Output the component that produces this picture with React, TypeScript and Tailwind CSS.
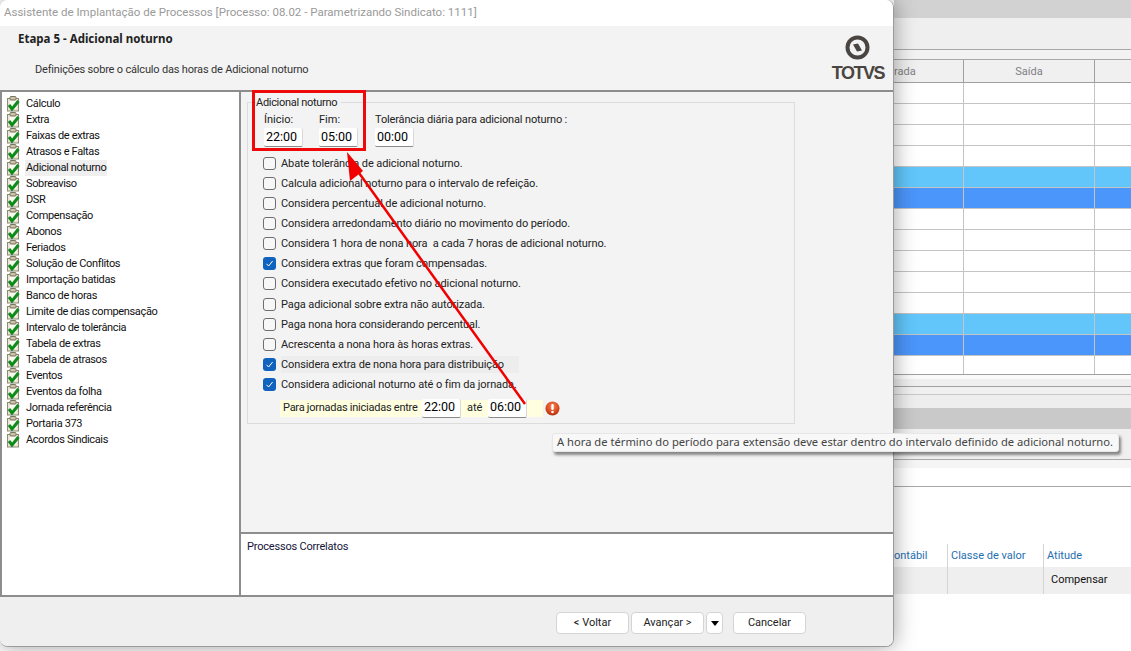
const steps = [
  "Cálculo",
  "Extra",
  "Faixas de extras",
  "Atrasos e Faltas",
  "Adicional noturno",
  "Sobreaviso",
  "DSR",
  "Compensação",
  "Abonos",
  "Feriados",
  "Solução de Conflitos",
  "Importação batidas",
  "Banco de horas",
  "Limite de dias compensação",
  "Intervalo de tolerância",
  "Tabela de extras",
  "Tabela de atrasos",
  "Eventos",
  "Eventos da folha",
  "Jornada referência",
  "Portaria 373",
  "Acordos Sindicais",
];

const options = [
  { label: "Abate tolerância de adicional noturno.", checked: false },
  { label: "Calcula adicional noturno para o intervalo de refeição.", checked: false },
  { label: "Considera percentual de adicional noturno.", checked: false },
  { label: "Considera arredondamento diário no movimento do período.", checked: false },
  { label: "Considera 1 hora de nona hora  a cada 7 horas de adicional noturno.", checked: false },
  { label: "Considera extras que foram compensadas.", checked: true },
  { label: "Considera executado efetivo no adicional noturno.", checked: false },
  { label: "Paga adicional sobre extra não autorizada.", checked: false },
  { label: "Paga nona hora considerando percentual.", checked: false },
  { label: "Acrescenta a nona hora às horas extras.", checked: false },
  { label: "Considera extra de nona hora para distribuição", checked: true, shaded: true },
  { label: "Considera adicional noturno até o fim da jornada.", checked: true },
];

function StepIcon() {
  return (
    <svg width="15" height="16" viewBox="0 0 15 16" className="shrink-0">
      <rect x="1.5" y="2.5" width="11" height="12.5" fill="#e8e4cf" stroke="#8d8a78" />
      <rect x="3.5" y="4.5" width="7" height="8.5" fill="#fbfaf2" />
      <rect x="4" y="0.5" width="6" height="3.5" rx="1" fill="#c9c4a8" stroke="#77745f" />
      <path d="M3 9 L6 13 L12.5 5" fill="none" stroke="#0f8a1c" strokeWidth="3" />
    </svg>
  );
}

function TimeInput({ value }: { value: string }) {
  return (
    <div className="flex h-[19px] w-[39px] shrink-0 items-center rounded-[2px] border-r border-b border-r-[#d8d8d8] border-b-[#8a8a8a] bg-white pl-[2px] text-[12.5px] tracking-normal text-black">
      {value}
    </div>
  );
}

function CheckRow({ label, checked, shaded }: { label: string; checked: boolean; shaded?: boolean }) {
  return (
    <div className="flex h-[20.15px] items-center gap-[5px]">
      {checked ? (
        <div className="flex size-[13px] shrink-0 items-center justify-center rounded-[3px] bg-[#0f62bd]">
          <svg width="9" height="9" viewBox="0 0 9 9">
            <path d="M1.5 4.8 L3.6 7 L7.6 2" fill="none" stroke="#fff" strokeWidth="1" />
          </svg>
        </div>
      ) : (
        <div className="size-[13px] shrink-0 rounded-[3px] border border-[#6e6e6e] bg-[#f7f7f7]" />
      )}
      <span className={`h-[17px] whitespace-pre pr-[2px] leading-[17px] tracking-[-0.1px] ${shaded ? "w-[238px] bg-[#ededed]" : ""}`}>{label}</span>
    </div>
  );
}

function Dialog() {
  return (
    <div className="relative z-10 flex h-[647px] w-[894px] shrink-0 flex-col overflow-hidden rounded-[8px] border-r border-b border-[#9a9a9a] bg-[#f3f3f3] shadow-[0_0_22px_rgba(0,0,0,0.38)]">
      <div className="h-[26px] shrink-0 bg-white pl-1 pt-[3px] text-[11.5px] leading-[18px] text-[#9a9a9a]">
        Assistente de Implantação de Processos [Processo: 08.02 - Parametrizando Sindicato: 1111]
      </div>

      <div className="flex h-[66px] shrink-0 justify-between border-b-2 border-[#8d8d8d] pr-[9px]">
        <div>
          <div className="pl-[18px] pt-[5px] font-['Noto_Sans',sans-serif] text-[11.5px] font-bold leading-[16px] text-[#222]">Etapa 5 - Adicional noturno</div>
          <div className="pl-[35px] pt-[15px] leading-[16px] tracking-[-0.18px] text-[#333]">Definições sobre o cálculo das horas de Adicional noturno</div>
        </div>
        <div className="flex flex-col items-center pt-[9px]">
          <svg width="25" height="25" viewBox="0 0 25 25">
            <circle cx="12.5" cy="12.5" r="10" fill="#f3f3f3" stroke="#4a4541" strokeWidth="4" />
            <polygon points="8,9.5 13,8.5 17,15.5 12,16.5" fill="#4a4541" />
          </svg>
          <div className="mt-[3px] font-['Liberation_Sans',sans-serif] text-[18px] font-bold leading-[20px] tracking-[-1.5px] text-[#4a4541]">TOTVS</div>
        </div>
      </div>

      <div className="flex min-h-0 flex-1">
        <div className="flex w-[241px] shrink-0 flex-col border-x-2 border-b-2 border-[#8d8d8d] bg-white pl-[4px] pt-[4px]">
          {steps.map((step) => (
            <div key={step} className="flex h-4 items-center gap-[4px] text-[#111]">
              <StepIcon />
              <span className={`px-[1px] leading-[16px] tracking-[-0.35px] ${step === "Adicional noturno" ? "bg-[#efefef]" : ""}`}>{step}</span>
            </div>
          ))}
        </div>

        <div className="flex min-w-0 flex-1 flex-col">
          <div className="flex-1 pl-[6px] pr-[98px] pt-[10px]">
            <div className="relative h-[322px] border border-[#dcdcdc] pl-[15px] pr-2 text-[#222]">
              <div className="absolute left-[8px] top-[-8px] bg-[#f3f3f3] pr-1 leading-[16px] tracking-[-0.3px]">Adicional noturno</div>
              <div className="flex pl-[1px] pt-[9px] leading-[16px]">
                <div>
                  <div className="h-[16px]">Ínicio:</div>
                  <TimeInput value="22:00" />
                </div>
                <div className="ml-4">
                  <div className="h-[16px]">Fim:</div>
                  <TimeInput value="05:00" />
                </div>
                <div className="ml-[17px]">
                  <div className="h-[16px] tracking-[-0.15px]">Tolerância diária para adicional noturno :</div>
                  <TimeInput value="00:00" />
                </div>
              </div>
              <div className="pt-[6px]">
                {options.map((o) => (
                  <CheckRow key={o.label} {...o} />
                ))}
              </div>
              <div className="ml-[17px] mt-[5px] flex h-[17px] w-[263px] items-center bg-[#ffffe0] pl-[3px]">
                <span className="w-[139px] shrink-0 whitespace-nowrap tracking-[-0.25px]">Para jornadas iniciadas entre</span>
                <TimeInput value="22:00" />
                <span className="w-[27px] shrink-0 pl-[6px]">até</span>
                <TimeInput value="06:00" />
              </div>
            </div>
          </div>
          <div className="h-[65px] shrink-0 border-y-2 border-[#8d8d8d] bg-white pl-[6px] pt-[5px] tracking-[-0.2px] text-[#15153a]">Processos Correlatos</div>
        </div>
      </div>

      <div className="flex h-[49px] shrink-0 items-start bg-[#efefef] pl-[556px] pt-[15px] text-[#222]">
        <div className="flex h-[22px] w-[73px] items-center justify-center rounded-[4px] border border-[#d4d4d4] bg-white">&lt; Voltar</div>
        <div className="ml-[2px] flex h-[22px] w-[73px] items-center justify-center rounded-[4px] border border-[#d4d4d4] bg-white">Avançar &gt;</div>
        <div className="ml-[2px] flex h-[22px] w-[17px] items-center justify-center rounded-[4px] border border-[#d4d4d4] bg-white">
          <div className="border-x-[4px] border-t-[5px] border-x-transparent border-t-black" />
        </div>
        <div className="ml-[10px] flex h-[22px] w-[73px] items-center justify-center rounded-[4px] border border-[#d4d4d4] bg-white">Cancelar</div>
      </div>
    </div>
  );
}

function GridRow({ color }: { color?: string }) {
  return (
    <div className={`grid h-[21px] shrink-0 grid-cols-[70px_131px_1fr] border-b border-[#c4c4c4] ${color ?? "bg-white"}`}>
      <div className="border-r border-[#c4c4c4]" />
      <div className="border-r border-[#c4c4c4]" />
      <div />
    </div>
  );
}

function BackgroundApp() {
  return (
    <div className="flex h-[651px] min-w-0 flex-1 flex-col overflow-hidden bg-white">
      <div className="h-[18px] shrink-0 bg-[#d2d2d2]" />
      <div className="h-[32px] shrink-0 border-b border-[#a8a8a8] bg-[#efefef]" />
      <div className="h-[10px] shrink-0 border-b border-[#a8a8a8] bg-[#f2f2f2]" />
      <div className="grid h-[23px] shrink-0 grid-cols-[70px_131px_1fr] border-b border-[#a0a0a0] bg-[#f0f0f0] text-[#7f7f85]">
        <div className="whitespace-nowrap border-r border-[#a0a0a0] pt-[3px] leading-[18px]">rada</div>
        <div className="border-r border-[#a0a0a0] pt-[3px] text-center leading-[18px]">Saída</div>
        <div />
      </div>
      <GridRow />
      <GridRow />
      <GridRow />
      <GridRow />
      <GridRow color="bg-[#62c6fb]" />
      <GridRow color="bg-[#4b96fa]" />
      <GridRow />
      <GridRow />
      <GridRow />
      <GridRow />
      <GridRow />
      <GridRow color="bg-[#62c6fb]" />
      <GridRow color="bg-[#4b96fa]" />
      <div className="grid h-[19px] shrink-0 grid-cols-[70px_131px_1fr] border-b border-[#a0a0a0] bg-white">
        <div className="border-r border-[#c4c4c4]" />
        <div className="border-r border-[#c4c4c4]" />
        <div />
      </div>
      <div className="h-[4px] shrink-0 bg-[#fafafa]" />
      <div className="h-[8px] shrink-0 border-b border-[#a0a0a0] bg-[#efefef]" />
      <div className="h-[8px] shrink-0 border-b border-[#c8c8c8] bg-[#f0f0f0]" />
      <div className="h-[13px] shrink-0 bg-[#eeeeee]" />
      <div className="h-[21px] shrink-0 bg-[#c9c9c9]" />
      <div className="h-[31px] shrink-0 border-b border-[#a8a8a8] bg-[#efefef]" />
      <div className="h-[8px] shrink-0 bg-[#f5f5f5]" />
      <div className="h-[19px] shrink-0 border-b border-[#a8a8a8] bg-white" />
      <div className="h-[57px] shrink-0 bg-white" />
      <div className="grid h-[23px] shrink-0 grid-cols-[54px_96px_1fr] bg-white text-[#1f6fb0]">
        <div className="whitespace-nowrap border-r border-[#d4d4d4] pt-[3px] leading-[18px]">ontábil</div>
        <div className="border-r border-[#d4d4d4] pl-[3px] pt-[3px] leading-[18px]">Classe de valor</div>
        <div className="pl-[3px] pt-[3px] leading-[18px]">Atitude</div>
      </div>
      <div className="grid h-[27px] shrink-0 grid-cols-[54px_96px_1fr] bg-[#efefef] text-[#111]">
        <div className="border-r border-[#d4d4d4]" />
        <div className="border-r border-[#d4d4d4]" />
        <div className="pl-[7px] pt-[4px] leading-[18px]">Compensar</div>
      </div>
    </div>
  );
}

export default function App() {
  return (
    <div className="relative flex h-[651px] w-[1131px] overflow-hidden bg-white font-['Roboto',sans-serif] text-[11px]">
      <Dialog />
      <BackgroundApp />

      {/* annotations on top of the screenshot */}
      <div className="absolute left-[252px] top-[90px] z-20 h-[61px] w-[114px] border-[3px] border-[#ee0a0a]" />
      <svg className="absolute left-0 top-0 z-20" width="1131" height="651" viewBox="0 0 1131 651">
        <line x1="525" y1="404" x2="354" y2="166" stroke="#f00000" strokeWidth="2.5" />
        <polygon points="347,152 363,171 350,181" fill="#f00000" />
      </svg>

      <div className="absolute left-[545px] top-[401px] z-20">
        <svg width="15" height="15" viewBox="0 0 15 15">
          <defs>
            <radialGradient id="err" cx="50%" cy="35%" r="65%">
              <stop offset="0%" stopColor="#f28a5c" />
              <stop offset="70%" stopColor="#d9431a" />
              <stop offset="100%" stopColor="#a93210" />
            </radialGradient>
          </defs>
          <circle cx="7.5" cy="7.5" r="7" fill="url(#err)" />
          <rect x="6.3" y="3" width="2.4" height="6" rx="1" fill="#fff" />
          <circle cx="7.5" cy="11" r="1.3" fill="#fff" />
        </svg>
      </div>

      <div className="absolute left-[552px] top-[433px] z-30 flex h-[19px] w-[567px] items-center whitespace-nowrap rounded-[3px] border border-[#e6e6e6] bg-[#f8f8f8] pl-[4px] font-['Noto_Sans',sans-serif] text-[11.2px] text-[#444] shadow-[2px_3px_3px_rgba(0,0,0,0.45)]">
        A hora de término do período para extensão deve estar dentro do intervalo definido de adicional noturno.
      </div>
    </div>
  );
}
